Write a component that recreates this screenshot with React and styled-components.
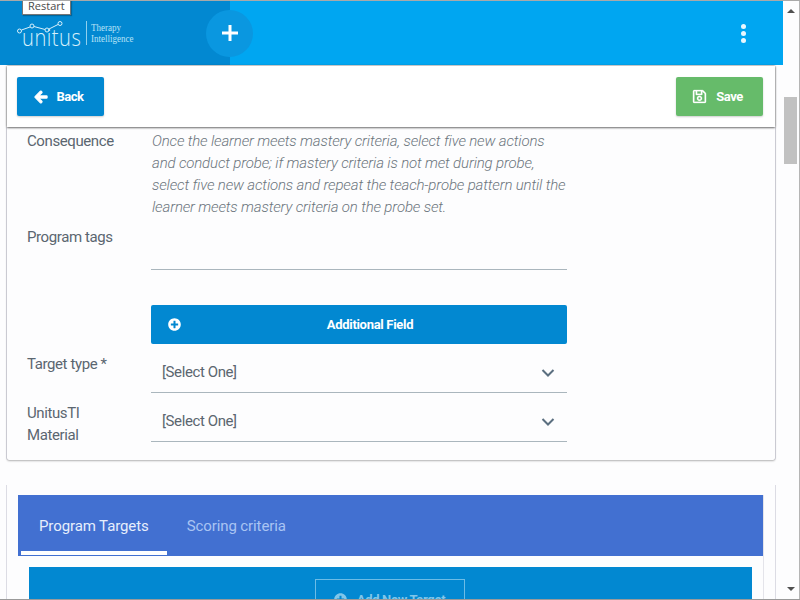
import styled, { createGlobalStyle } from "styled-components";
import { FaArrowLeft, FaPlusCircle, FaRegSave } from "react-icons/fa";

const GlobalStyle = createGlobalStyle`
  html, body {
    margin: 0;
    padding: 0;
    overflow: hidden;
    background: #fdfdfe;
    font-family: Roboto, "Liberation Sans", sans-serif;
  }
`;

const Page = styled.div`
  position: relative;
  display: flex;
  width: 800px;
  height: 600px;
  box-sizing: border-box;
  border-top: 1px solid #a9a9a9;
  border-bottom: 1px solid #9a9a9a;
  overflow: hidden;
`;

const Main = styled.div`
  flex: 1;
  min-width: 0;
  display: flex;
  flex-direction: column;
`;

const Header = styled.header`
  height: 64px;
  flex: none;
  display: flex;
  align-items: center;
  justify-content: space-between;
  background: #00a6f1;
`;

const Brand = styled.div`
  width: 230px;
  height: 100%;
  box-sizing: border-box;
  padding-left: 17px;
  display: flex;
  align-items: center;
  justify-content: space-between;
  background: #0288d1;
`;

const Logo = styled.div`
  display: flex;
  align-items: center;
  color: #d8f0fb;
`;

const LogoMark = styled.div`
  position: relative;
  width: 69px;
  height: 24px;
`;

const LogoWord = styled.span`
  position: absolute;
  left: 5px;
  top: 4px;
  font-family: "Open Sans", sans-serif;
  font-size: 24px;
  font-weight: 300;
  letter-spacing: 0.6px;
  line-height: 24px;
  transform: scaleX(0.84);
  transform-origin: left center;
`;

const LogoSub = styled.div`
  height: 24px;
  padding-left: 4px;
  border-left: 1px solid #8fd0ee;
  display: flex;
  flex-direction: column;
  justify-content: center;
  color: #b9e3f7;
  font-family: "Liberation Serif", serif;
  font-size: 11px;
  line-height: 11px;
`;

const LogoSubLine = styled.span`
  display: block;
  white-space: nowrap;
  transform: scaleX(0.82);
  transform-origin: left center;
`;

const AddCircle = styled.div`
  width: 47px;
  height: 47px;
  margin-right: -23px;
  border-radius: 50%;
  background: #0a97e0;
  display: flex;
  align-items: center;
  justify-content: center;
  z-index: 1;
`;

const Kebab = styled.div`
  margin-right: 37px;
  display: flex;
  flex-direction: column;
  gap: 2px;
`;

const Dot = styled.span`
  width: 5px;
  height: 5px;
  border-radius: 50%;
  background: #e8f7fe;
`;

const Tooltip = styled.div`
  position: absolute;
  top: -1px;
  left: 22px;
  width: 49px;
  height: 15px;
  box-sizing: border-box;
  padding-left: 5px;
  background: #fff;
  border: 1px solid #767676;
  border-top: none;
  box-shadow: 1px 1px 1px rgba(0, 0, 0, 0.25);
  color: #4a4a4a;
  font-family: "Open Sans", sans-serif;
  font-size: 11px;
  line-height: 12px;
`;

const Toolbar = styled.div`
  height: 61px;
  flex: none;
  margin: 1px 8px 0 7px;
  padding: 0 12px 0 10px;
  box-sizing: border-box;
  display: flex;
  align-items: center;
  justify-content: space-between;
  background: #fff;
  box-shadow: 0 0 2px rgba(0, 0, 0, 0.6), 0 1px 2px rgba(0, 0, 0, 0.4);
  z-index: 1;
`;

const ActionButton = styled.button`
  width: 87px;
  height: 39px;
  padding: 0 4px 0 0;
  border: none;
  border-radius: 2px;
  display: flex;
  align-items: center;
  justify-content: center;
  gap: 9px;
  background: ${(p) => p.$color};
  color: #fff;
  font-family: Roboto, sans-serif;
  font-size: 13px;
  font-weight: 700;
  letter-spacing: -0.5px;
  box-shadow: 0 1px 2px rgba(0, 0, 0, 0.2);

  svg {
    stroke: currentColor;
    stroke-width: ${(p) => p.$iconStroke}px;
  }
`;

const FormCard = styled.section`
  flex: none;
  height: 333px;
  margin: 0 8px 0 7px;
  padding: 2px 0 0 20px;
  box-sizing: border-box;
  background: #fdfdfe;
  border-radius: 0 0 2px 2px;
  box-shadow: 0 1px 2px rgba(0, 0, 0, 0.3), -1px 0 0 #dcdce4, 1px 0 0 #dcdce4;
  display: flex;
  flex-direction: column;
`;

const Row = styled.div`
  display: grid;
  grid-template-columns: 124px 416px;
  margin-bottom: ${(p) => p.$gap || 0}px;
`;

const Label = styled.label`
  padding-top: 1px;
  color: #5b6670;
  font-size: 15px;
  letter-spacing: -0.4px;
  line-height: 22px;
`;

const Description = styled.p`
  margin: 0;
  padding: 1px 0 0 1px;
  color: #6c757d;
  font-size: 15px;
  font-weight: 300;
  font-style: italic;
  letter-spacing: -0.15px;
  line-height: 22px;
`;

const TagsInput = styled.div`
  height: 44px;
  border-bottom: 1px solid #aab6bd;
`;

const AdditionalField = styled.button`
  position: relative;
  height: 39px;
  padding: 0 0 0 22px;
  border: none;
  border-radius: 2px;
  background: #0288d1;
  color: #fff;
  font-family: Roboto, sans-serif;
  font-size: 13px;
  font-weight: 700;
  letter-spacing: -0.3px;
  grid-column: 2;
`;

const FieldIcon = styled.span`
  position: absolute;
  left: 17px;
  top: 13px;
  display: flex;
`;

const Select = styled.div`
  height: 41px;
  box-sizing: border-box;
  padding: 0 12px 0 11px;
  display: flex;
  align-items: center;
  justify-content: space-between;
  border-bottom: 1px solid #aab6bd;
  color: #5b6670;
  font-size: 15px;
  letter-spacing: -0.4px;

  svg {
    margin-top: 2px;
  }
`;

const TargetsCard = styled.section`
  flex: 1;
  margin: 25px 8px 0 7px;
  padding: 10px 11px 0;
  background: #fdfdfe;
  box-shadow: -1px 0 0 #dcdce4, 1px 0 0 #dcdce4;
`;

const TargetsPanel = styled.div`
  width: 745px;
  height: 200px;
  border-right: 1px solid #e4e4ea;
`;

const Tabs = styled.div`
  height: 61px;
  box-sizing: border-box;
  padding-left: 3px;
  display: flex;
  background: #4270d1;
`;

const Tab = styled.div`
  height: 60px;
  box-sizing: border-box;
  padding: 6px 18px 0;
  display: flex;
  align-items: center;
  color: ${(p) => (p.$active ? "#e6eefc" : "#a9c4f3")};
  border-bottom: 4px solid ${(p) => (p.$active ? "#fff" : "transparent")};
  font-size: 15px;
  letter-spacing: -0.1px;

  & + & {
    margin-left: 2px;
  }
`;

const TargetsBody = styled.div`
  height: 60px;
  margin: 11px 11px 0;
  padding-top: 12px;
  box-sizing: border-box;
  background: #0288d1;
  display: flex;
  justify-content: center;
`;

const AddTarget = styled.div`
  width: 150px;
  height: 40px;
  margin-right: 2px;
  box-sizing: border-box;
  border: 1px solid #6cbce6;
  display: flex;
  align-items: center;
  justify-content: center;
  gap: 10px;
  color: #80c6ea;
  font-size: 13px;
  font-weight: 700;
  letter-spacing: -0.3px;
`;

const Scrollbar = styled.div`
  width: 17px;
  flex: none;
  position: relative;
  background: #fdfdfe;
  border-right: 1px solid #b5b5b5;
  box-sizing: border-box;
`;

const ArrowUp = styled.span`
  position: absolute;
  top: 8px;
  left: 4px;
  border: 4px solid transparent;
  border-top: none;
  border-bottom: 4px solid #505050;
`;

const ArrowDown = styled.span`
  position: absolute;
  bottom: 8px;
  left: 4px;
  border: 4px solid transparent;
  border-bottom: none;
  border-top: 4px solid #505050;
`;

const Thumb = styled.div`
  position: absolute;
  top: 96px;
  left: 1px;
  width: 13px;
  height: 67px;
  background: #c1c1c1;
`;

function Chevron() {
  return (
    <svg width="14" height="10" viewBox="0 0 14 10">
      <path d="M1.5 2 L7 7.5 L12.5 2" fill="none" stroke="#5b6f80" strokeWidth="2" />
    </svg>
  );
}

function LogoDots() {
  return (
    <svg width="48" height="14" viewBox="0 0 48 14" style={{ position: "absolute", left: 0, top: 0 }}>
      <g fill="none" stroke="#d8f0fb" strokeWidth="1">
        <circle cx="2.5" cy="10" r="2" />
        <circle cx="15" cy="5" r="2" />
        <circle cx="30" cy="9" r="2" />
        <circle cx="43" cy="2.5" r="2" />
        <path d="M4.5 9 L13 6 M17 5.5 L28 8.5 M32 8 L41 3.5" />
      </g>
    </svg>
  );
}

export default function App() {
  return (
    <>
      <GlobalStyle />
      <Page>
        <Main>
          <Header>
            <Brand>
              <Logo>
                <LogoMark>
                  <LogoWord>unitus</LogoWord>
                  <LogoDots />
                </LogoMark>
                <LogoSub>
                  <LogoSubLine>Therapy</LogoSubLine>
                  <LogoSubLine>Intelligence</LogoSubLine>
                </LogoSub>
              </Logo>
              <AddCircle>
                <svg width="18" height="18" viewBox="0 0 18 18">
                  <path d="M9 1 V17 M1 9 H17" stroke="#fff" strokeWidth="3" />
                </svg>
              </AddCircle>
            </Brand>
            <Kebab>
              <Dot />
              <Dot />
              <Dot />
            </Kebab>
          </Header>
          <Toolbar>
            <ActionButton $color="#0288d1" $iconStroke={40}>
              <FaArrowLeft size={14} />
              Back
            </ActionButton>
            <ActionButton $color="#66bb6a" $iconStroke={8}>
              <FaRegSave size={15} />
              Save
            </ActionButton>
          </Toolbar>
          <FormCard>
            <Row $gap={7}>
              <Label>Consequence</Label>
              <Description>
                Once the learner meets mastery criteria, select five new actions and conduct probe; if mastery
                criteria is not met during probe, select five new actions and repeat the teach-probe pattern until
                the learner meets mastery criteria on the probe set.
              </Description>
            </Row>
            <Row $gap={35}>
              <Label>Program tags</Label>
              <TagsInput />
            </Row>
            <Row $gap={8}>
              <AdditionalField>
                <FieldIcon>
                  <FaPlusCircle size={13} />
                </FieldIcon>
                Additional Field
              </AdditionalField>
            </Row>
            <Row $gap={8}>
              <Label>Target type *</Label>
              <Select>
                [Select One]
                <Chevron />
              </Select>
            </Row>
            <Row>
              <Label>
                UnitusTI
                <br />
                Material
              </Label>
              <Select>
                [Select One]
                <Chevron />
              </Select>
            </Row>
          </FormCard>
          <TargetsCard>
            <TargetsPanel>
              <Tabs>
                <Tab $active>Program Targets</Tab>
                <Tab>Scoring criteria</Tab>
              </Tabs>
              <TargetsBody>
                <AddTarget>
                  <FaPlusCircle size={13} />
                  Add New Target
                </AddTarget>
              </TargetsBody>
            </TargetsPanel>
          </TargetsCard>
        </Main>
        <Scrollbar>
          <ArrowUp />
          <Thumb />
          <ArrowDown />
        </Scrollbar>
        <Tooltip>Restart</Tooltip>
      </Page>
    </>
  );
}
